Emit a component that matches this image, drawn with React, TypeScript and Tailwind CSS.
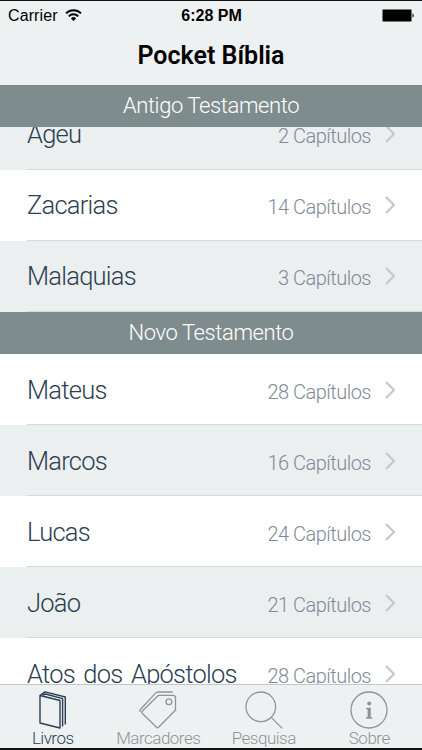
import type { ReactNode } from "react";
import clsx from "clsx";

type Book = { name: string; chapters: number };

const oldTestament: Book[] = [
  { name: "Ageu", chapters: 2 },
  { name: "Zacarias", chapters: 14 },
  { name: "Malaquias", chapters: 3 },
];

const newTestament: Book[] = [
  { name: "Mateus", chapters: 28 },
  { name: "Marcos", chapters: 16 },
  { name: "Lucas", chapters: 24 },
  { name: "João", chapters: 21 },
  { name: "Atos dos Apóstolos", chapters: 28 },
];

const StatusBar = () => (
  <div className="flex h-[29px] items-center pl-2 pr-[7px] font-['Liberation_Sans'] text-black">
    <div className="flex flex-1 items-center gap-[7px]">
      <span className="text-[16px] tracking-[0.1px]">Carrier</span>
      <svg width="17" height="13" viewBox="0 0 17 13" fill="none" stroke="#000">
        <path d="M1 4.4a10.6 10.6 0 0 1 15 0" strokeWidth="2" />
        <path d="M3.7 7.3a6.8 6.8 0 0 1 9.6 0" strokeWidth="1.9" />
        <path d="M8.5 12 5.9 9.4a3.7 3.7 0 0 1 5.2 0z" fill="#000" stroke="none" />
      </svg>
    </div>
    <span className="text-[16px] font-bold">6:28 PM</span>
    <div className="flex flex-1 justify-end">
      <svg width="33" height="13" viewBox="0 0 33 13">
        <rect x="0.5" y="0.5" width="29" height="12" rx="1" fill="#000" stroke="#777" />
        <path d="M30.5 4.5c1.6.3 1.6 3.7 0 4z" fill="#000" />
      </svg>
    </div>
  </div>
);

const SectionHeader = ({ children }: { children: ReactNode }) => (
  <h2 className="flex h-[42px] items-center justify-center bg-[#7f8c8d] pb-px text-[22px] font-light tracking-[-0.4px] text-white">
    {children}
  </h2>
);

const BookRow = ({ book, shaded }: { book: Book; shaded: boolean }) => (
  <li
    className={clsx(
      "flex h-[71px] pl-[27px]",
      shaded ? "bg-[#ebeff0]" : "bg-white",
    )}
  >
    <div className="flex flex-1 items-center border-b border-[#d6d8da] pr-[27px]">
      <div className="flex flex-1 items-baseline justify-between whitespace-nowrap">
        <span className="text-[25.5px] font-[350] tracking-[-0.75px] text-[#2c3e50] [word-spacing:3px]">
          {book.name}
        </span>
        <span className="text-[20px] font-[350] tracking-[-0.5px] text-[#7f8a96]">
          {book.chapters} Capítulos
        </span>
      </div>
      <svg
        className="ml-[14px]"
        width="10"
        height="18"
        viewBox="0 0 10 18"
        fill="none"
        stroke="#c7c7cc"
        strokeWidth="2.2"
      >
        <path d="m1 1 8 8-8 8" />
      </svg>
    </div>
  </li>
);

const BooksIcon = () => (
  <svg width="28" height="38" viewBox="0 0 28 38" fill="none" stroke="currentColor" strokeWidth="1.4" strokeLinejoin="round">
    <path d="M1 4.5 21 9.5V37L1 32z" />
    <path d="M1 4.5 6 .9 26.3 6v27.5M3.8 4.2 6.5 3l17.1 4.7V35.5" />
  </svg>
);

const TagIcon = () => (
  <svg width="38" height="38" viewBox="0 0 38 38" fill="none" stroke="currentColor" strokeWidth="1.3" strokeLinejoin="round">
    <path d="M19.5 4.3H34a2.5 2.5 0 0 1 2.5 2.5V19L19.6 36.3a1.5 1.5 0 0 1-2.1 0L3.4 22.5a1.8 1.8 0 0 1 0-2.5z" />
    <path d="M1.2 20.8a1.5 1.5 0 0 1 0-2L16.3 2.4Q17.5 1 19.3 1h14.4" />
    <circle cx="29.9" cy="10.8" r="2.9" />
  </svg>
);

const SearchIcon = () => (
  <svg width="38" height="38" viewBox="0 0 38 38" fill="none" stroke="currentColor" strokeWidth="1.3">
    <circle cx="15.8" cy="15.8" r="14.8" />
    <path d="m26.2 26.4 11 11" />
  </svg>
);

const InfoIcon = () => (
  <svg width="38" height="38" viewBox="0 0 38 38" fill="none" stroke="currentColor" strokeWidth="1.3">
    <circle cx="19" cy="19" r="18" />
    <g fill="currentColor" stroke="none">
      <circle cx="19.2" cy="12.6" r="2" />
      <path d="M16.2 16.8h4.6v9.2l1.6.6v1.2H16v-1.2l1.6-.6v-7.5l-1.4-.6z" />
    </g>
  </svg>
);

const tabs = [
  { label: "Livros", icon: <BooksIcon />, active: true },
  { label: "Marcadores", icon: <TagIcon />, active: false },
  { label: "Pesquisa", icon: <SearchIcon />, active: false },
  { label: "Sobre", icon: <InfoIcon />, active: false },
];

const App = () => {
  return (
    <div className="flex h-[750px] w-[422px] flex-col overflow-hidden border-t border-b-2 border-t-[#111] border-b-[#111] bg-[#edf1f2] font-['Roboto',sans-serif]">
      <StatusBar />
      <h1 className="flex h-[55px] items-center justify-center pb-[3px] text-[25px] font-semibold text-black">
        Pocket Bíblia
      </h1>
      <SectionHeader>Antigo Testamento</SectionHeader>

      <main className="min-h-0 flex-1 overflow-hidden">
        <ul className="-mt-7">
          {oldTestament.map((book, i) => (
            <BookRow key={book.name} book={book} shaded={i % 2 === 0} />
          ))}
        </ul>
        <SectionHeader>Novo Testamento</SectionHeader>
        <ul className="[&>li>div]:pt-0.5">
          {newTestament.map((book, i) => (
            <BookRow key={book.name} book={book} shaded={i % 2 === 1} />
          ))}
        </ul>
      </main>

      <nav className="grid h-[64px] shrink-0 grid-cols-4 border-t border-[#c3c7c9] bg-[#edf1f2]">
        {tabs.map((tab) => (
          <div
            key={tab.label}
            className={clsx(
              "flex flex-col items-center pt-1.5",
              tab.active ? "text-[#2c3e50]" : "text-[#929394]",
            )}
          >
            {tab.icon}
            <span className="-mt-px text-[17px] leading-[20px] font-[350] tracking-[-0.5px]">
              {tab.label}
            </span>
          </div>
        ))}
      </nav>
    </div>
  );
};

export default App;
